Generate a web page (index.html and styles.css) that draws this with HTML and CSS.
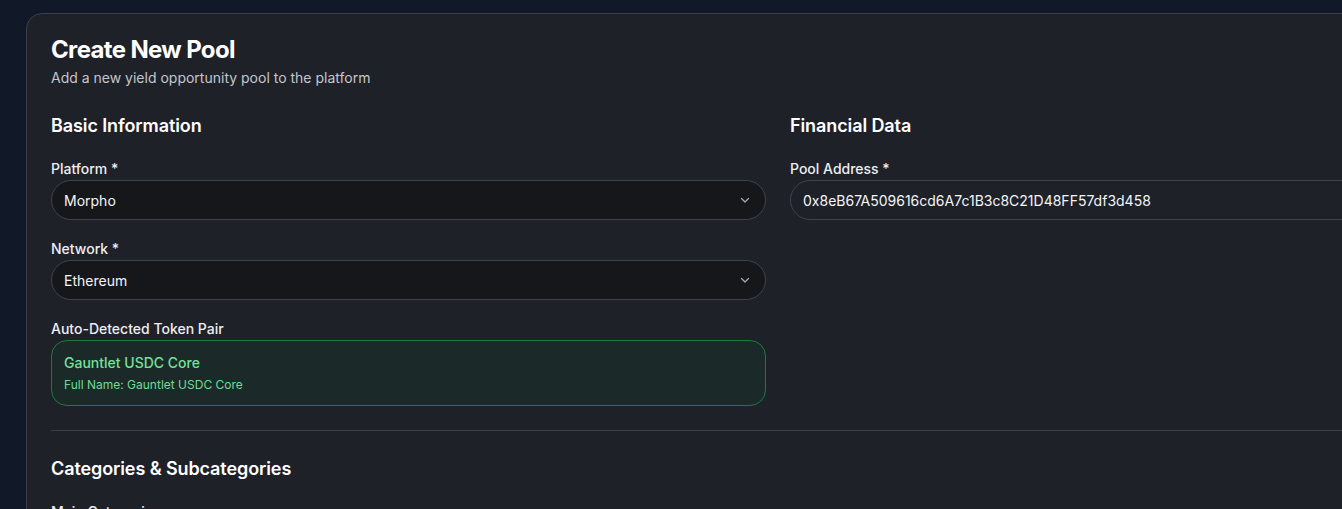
FILE: index.html
```html
<!DOCTYPE html>
<html lang="en">
<head>
<meta charset="utf-8">
<title>Create New Pool</title>
<link rel="stylesheet" href="styles.css">
</head>
<body>
<div class="page">
  <div class="card">
    <h1 class="title">Create New Pool</h1>
    <p class="subtitle">Add a new yield opportunity pool to the platform</p>

    <div class="grid">
      <section class="col">
        <h2 class="section-title">Basic Information</h2>
        <div class="field">
          <label class="label">Platform *</label>
          <div class="select">
            <span>Morpho</span>
            <svg class="chev" width="16" height="16" viewBox="0 0 16 16" fill="none"><path d="M4.5 6.5 8 10l3.5-3.5" stroke="#a3a7b0" stroke-width="1.3" stroke-linecap="round" stroke-linejoin="round"/></svg>
          </div>
        </div>
        <div class="field">
          <label class="label">Network *</label>
          <div class="select">
            <span>Ethereum</span>
            <svg class="chev" width="16" height="16" viewBox="0 0 16 16" fill="none"><path d="M4.5 6.5 8 10l3.5-3.5" stroke="#a3a7b0" stroke-width="1.3" stroke-linecap="round" stroke-linejoin="round"/></svg>
          </div>
        </div>
        <div class="field">
          <label class="label">Auto-Detected Token Pair</label>
          <div class="token-box">
            <div class="token-name">Gauntlet USDC Core</div>
            <div class="token-full">Full Name: Gauntlet USDC Core</div>
          </div>
        </div>
      </section>

      <section class="col">
        <h2 class="section-title">Financial Data</h2>
        <div class="field">
          <label class="label">Pool Address *</label>
          <div class="input">0x8eB67A509616cd6A7c1B3c8C21D48FF57df3d458</div>
        </div>
      </section>
    </div>

    <div class="divider"></div>

    <section class="categories">
      <h2 class="section-title">Categories &amp; Subcategories</h2>
      <div class="field">
        <label class="label">Main Categories</label>
      </div>
    </section>
  </div>
</div>
</body>
</html>
```

FILE: styles.css
```css
* { box-sizing: border-box; }

html, body {
  margin: 0;
  padding: 0;
  height: 100%;
  overflow: hidden;
}

body {
  background: #111827;
  font-family: Inter, "Noto Sans", "Liberation Sans", sans-serif;
  color: #f3f4f6;
}

.page {
  padding: 13px 0 0 26px;
}

.card {
  width: 1504px;
  background: #1f2129;
  border: 1px solid #3b3f4a;
  border-radius: 16px;
  padding: 20px 24px 40px;
}

.title {
  margin: 0;
  font-size: 24px;
  line-height: 32px;
  font-weight: 700;
  color: #ffffff;
  letter-spacing: -0.65px;
}

.subtitle {
  margin: 2px 0 0;
  font-size: 14px;
  line-height: 20px;
  color: #c3c6cd;
}

.grid {
  display: grid;
  grid-template-columns: 715px 715px;
  column-gap: 24px;
  margin-top: 24px;
}

.section-title {
  margin: 0;
  font-size: 18px;
  line-height: 28px;
  font-weight: 600;
  color: #ffffff;
  letter-spacing: -0.1px;
}

.field {
  margin-top: 20px;
  display: flex;
  flex-direction: column;
}

.label {
  font-size: 14px;
  line-height: 18px;
  margin-bottom: 2px;
  font-weight: 500;
  color: #eceef1;
}

.select {
  height: 40px;
  border: 1px solid #40434e;
  border-radius: 20px;
  background: #16171b;
  display: flex;
  align-items: center;
  justify-content: space-between;
  padding: 0 12px 0 12px;
  font-size: 14px;
  color: #f4f5f7;
}

.chev { display: block; }

.input {
  height: 40px;
  border: 1px solid #40434e;
  border-radius: 20px;
  background: #1f2129;
  display: flex;
  align-items: center;
  padding: 0 12px;
  font-size: 14px;
  color: #f4f5f7;
}

.token-box {
  border: 1px solid #1b7a3f;
  border-radius: 16px;
  background: #1b2a28;
  padding: 12px;
}

.token-name {
  font-size: 14px;
  line-height: 20px;
  font-weight: 500;
  color: #74e09a;
}

.token-full {
  margin-top: 4px;
  font-size: 12px;
  line-height: 16px;
  color: #6edc95;
}

.divider {
  margin-top: 24px;
  height: 1px;
  background: #3b3e49;
}

.categories {
  padding-top: 24px;
}
```
